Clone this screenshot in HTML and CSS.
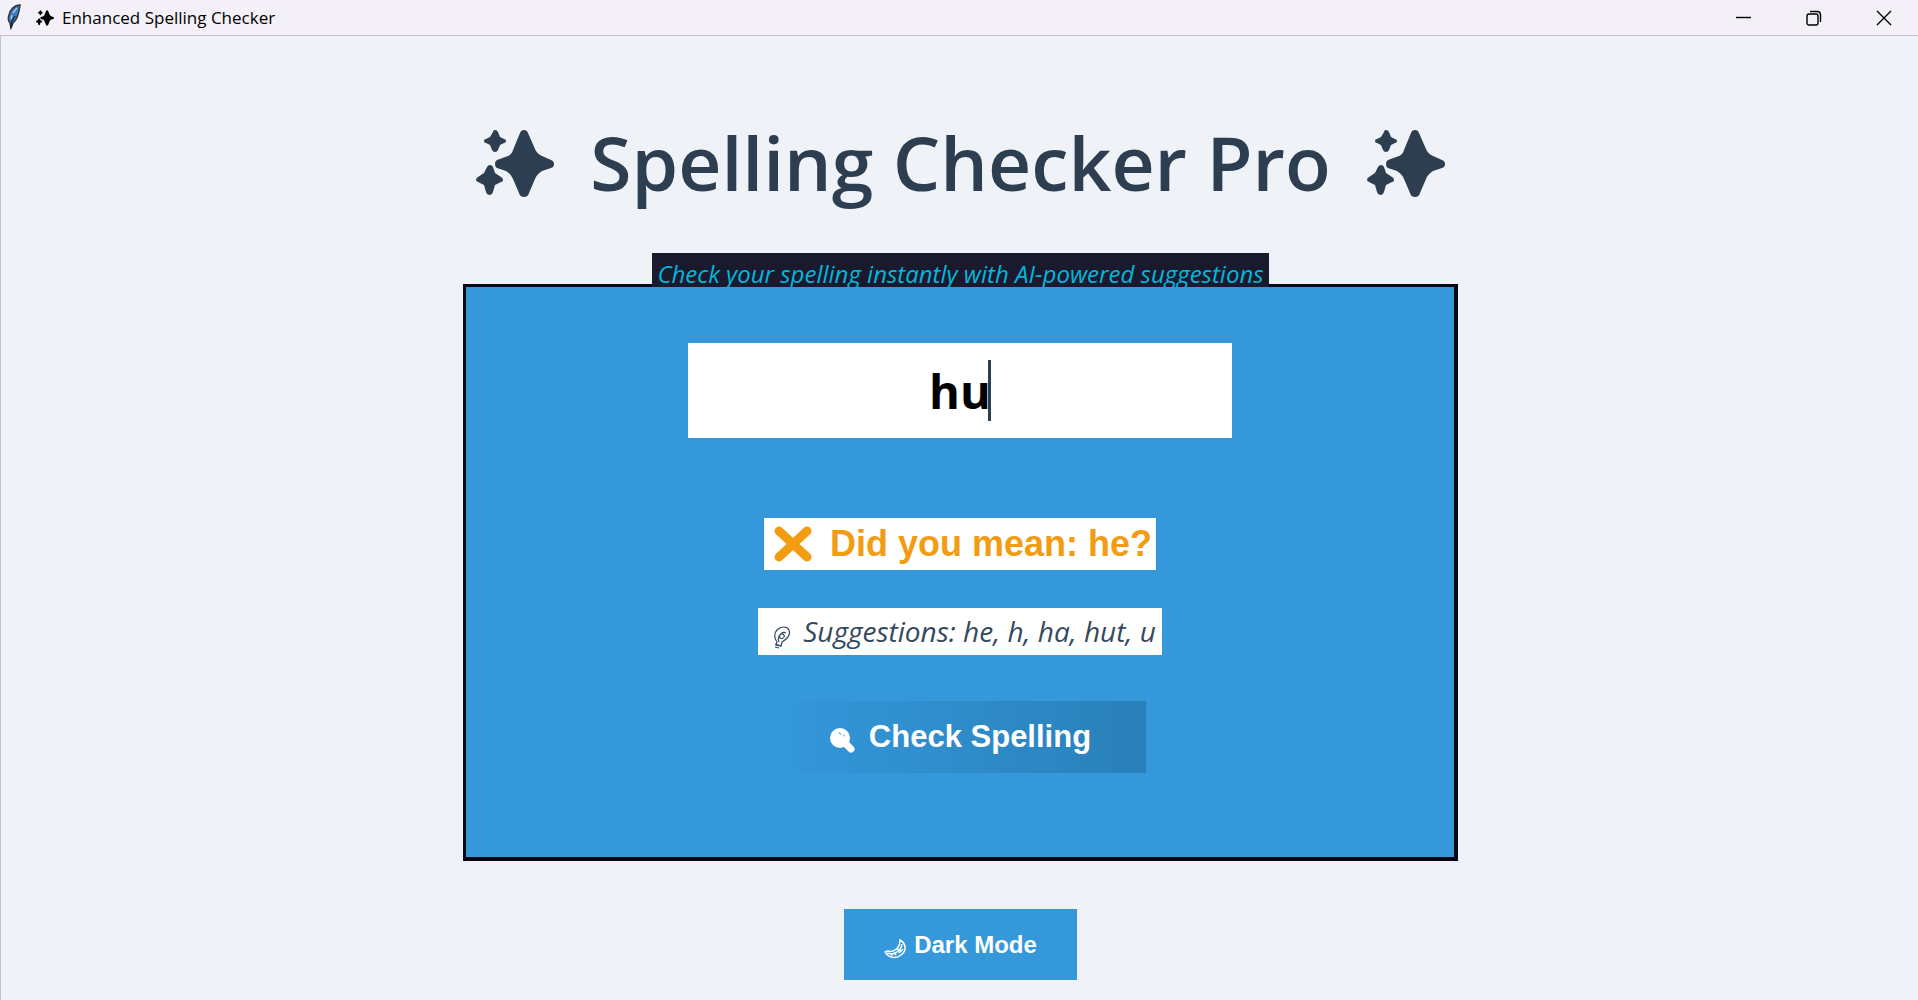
FILE: index.html
```html
<!DOCTYPE html>
<html lang="en">
<head>
<meta charset="utf-8">
<meta name="viewport" content="width=device-width, initial-scale=1">
<title>✨ Enhanced Spelling Checker</title>
<link rel="stylesheet" href="styles.css">
</head>
<body>
<svg width="0" height="0" class="defs" aria-hidden="true">
  <symbol id="sparkles" viewBox="0 0 78 68">
    <path d="M44 3Q45 0 48 0Q51 0 52 3L59 19Q61 24 66 26L75 30Q78 31 78 34Q78 37 75 38L66 41Q61 44 59 49L53 63Q52 67 48 67Q44 67 43 63L37 49Q35 44 30 41L21 38Q19 37 19 34Q19 31 21 30L32 26Q36 24 37 20Z"/>
    <path d="M17 2Q17 0 19 0Q21 0 22 2L24 7L28 9Q30 9 30 11Q30 13 28 13L24 15L22 20Q21 22 19 22Q17 22 16 20L14 15L10 13Q8 13 8 11Q8 9 10 9L14 7Z"/>
    <path d="M11 37Q12 35 14 35Q16 35 17 37L19 43L25 47Q27 48 27 50Q27 52 25 52L19 55L17 62Q16 65 14 65Q11 65 10 62L8 55L2 52Q0 51 0 50Q0 48 2 47L8 43Z"/>
  </symbol>
</svg>
<div class="window">
  <header class="titlebar">
    <svg class="feather" viewBox="0 0 16 26" aria-hidden="true">
      <path d="M14 1C8 1 4 6 3 11C2 14 2 17 4 19L5 24L7 19C11 16 13 10 14 1Z" fill="#3d78b8" stroke="#33343c" stroke-width="1.5"/>
      <path d="M9 12L6 17L5 24" fill="none" stroke="#17202c" stroke-width="1.3"/>
      <path d="M11 4L7 9M6 11L5 15" stroke="#a9cdf0" stroke-width="1.3"/>
    </svg>
    <svg class="mini-sparkles" aria-hidden="true"><use href="#sparkles"/></svg>
    <span class="caption">Enhanced Spelling Checker</span>
    <button class="control" aria-label="Minimize"><svg viewBox="0 0 16 16"><path d="M0 7.5H15"/></svg></button>
    <button class="control" aria-label="Restore"><svg viewBox="0 0 16 16"><rect x="1" y="4" width="11" height="11" rx="2"/><path d="M4 1.500H11Q14.500 1.500 14.500 5V12"/></svg></button>
    <button class="control" aria-label="Close"><svg viewBox="0 0 16 16"><path d="M1 1L15 15M15 1L1 15"/></svg></button>
  </header>
  <main class="page">
    <h1 class="heading">
      <svg class="sparkles" aria-hidden="true"><use href="#sparkles"/></svg>
      <span>Spelling Checker Pro</span>
      <svg class="sparkles" aria-hidden="true"><use href="#sparkles"/></svg>
    </h1>
    <p class="tagline">Check your spelling instantly with AI-powered suggestions</p>
    <section class="card">
      <div class="field">
        <input class="word" type="text" value="hu" aria-label="Word to check">
        <span class="caret"></span>
      </div>
      <p class="result">
        <svg class="cross" viewBox="0 0 38 36" aria-hidden="true"><path d="M5 5L33 31M33 5L5 31"/></svg>
        <span>Did you mean: he?</span>
      </p>
      <p class="suggestions">
        <svg class="bulb" viewBox="0 0 18 24" aria-hidden="true">
          <path d="M4 16C1 12 1 7 4 4C8 0 14 0 16 4C18 9 14 13 9 16L8 20L3 19Z"/>
          <path d="M6 16C4 11 7 7 10 8C13 10 10 14 7 12C5 9 10 5 13 7M2 18L8 20M2 21L6 22"/>
        </svg>
        <span>Suggestions: he, h, ha, hut, u</span>
      </p>
      <button class="check">
        <svg class="lens" viewBox="0 0 26 25" aria-hidden="true"><circle cx="11" cy="10" r="10"/><path d="M16 15L22 21"/><path class="glint" d="M10 5L12 6M15 7V8"/></svg>
        <span>Check Spelling</span>
      </button>
    </section>
    <button class="mode">
      <svg class="moon" viewBox="0 0 22 20" aria-hidden="true">
        <path d="M16 1C22 4 23 12 17 16C12 20 4 19 1 13L3 12C10 14 16 9 16 1Z"/>
        <path d="M3 14C10 17 17 12 18 5M13 10L17 12M10 13L12 16M19 10L15 14M7 14L8 17"/>
      </svg>
      <span>Dark Mode</span>
    </button>
  </main>
</div>
</body>
</html>
```
FILE: styles.css
```css
* { box-sizing: border-box; }
body {
  margin: 0;
  background: #eff3f8;
  color: #2c3e50;
  font-family: "Open Sans", "Noto Sans", sans-serif;
}
p, h1 { margin: 0; }
button { border: 0; border-radius: 0; padding: 0; font-family: "Liberation Sans", Arial, sans-serif; font-weight: 700; color: #fff; }
svg { display: block; flex: none; }
.defs { position: absolute; }
.window { display: flex; flex-direction: column; min-height: 100vh; }

.titlebar {
  display: flex;
  align-items: center;
  height: 36px;
  padding-left: 6px;
  background: #f3f0f7;
  border-bottom: 1px solid #c3c2ca;
}
.feather { width: 16px; height: 26px; margin-bottom: 2px; }
.mini-sparkles { width: 18px; height: 16px; margin: 0 8px 0 14px; fill: #000; }
.caption { flex: 1; font: 17px/24px "Open Sans", "Noto Sans", sans-serif; color: #000; }
.control { display: grid; place-items: center; width: 70px; height: 35px; padding-left: 1px; background: none; }
.control svg { width: 16px; height: 16px; fill: none; stroke: #000; stroke-width: 1.4; }

.page {
  flex: 1;
  display: flex;
  flex-direction: column;
  align-items: center;
  padding: 76px 0 20px 2px;
  border-left: 1px solid #c3c2ca;
}
.heading {
  display: flex;
  align-items: center;
  gap: 36px;
  font-size: 75px;
  line-height: 100px;
  font-weight: 600;
  white-space: nowrap;
}
.sparkles { width: 78px; height: 68px; margin-top: 4px; fill: #2c3e50; }
.tagline {
  position: relative;
  z-index: 1;
  height: 34px;
  margin: 41px 0 -3px;
  padding: 4px 5px 0;
  overflow: hidden;
  background: #1a1a2e;
  color: #00b8dc;
  font: italic 24px/34px "Open Sans", "Noto Sans", sans-serif;
  white-space: nowrap;
}
.card {
  display: flex;
  flex-direction: column;
  align-items: center;
  width: 52%;
  padding: 56px 0 84px;
  background: #3498db;
  border: solid #0a0714;
  border-width: 3px 4px 4px 3px;
}
.field { position: relative; width: 55%; margin-bottom: 80px; }
.word {
  display: block;
  width: 100%;
  height: 95px;
  padding: 0;
  border: 0;
  outline: 0;
  background: #fff;
  color: #000;
  font: 700 47px/64px "Open Sans", "Noto Sans", sans-serif;
  text-align: center;
}
.caret { position: absolute; top: 17px; left: calc(50% + 28px); width: 3px; height: 61px; background: #2c3e50; }
.result, .suggestions { display: flex; align-items: center; background: #fff; white-space: nowrap; }
.result {
  gap: 18px;
  height: 52px;
  margin-bottom: 38px;
  padding: 0 4px 0 10px;
  color: #f39c12;
  font: 700 36px/52px "Liberation Sans", Arial, sans-serif;
}
.cross { width: 38px; height: 36px; fill: none; stroke: #f39c12; stroke-width: 9; stroke-linecap: round; }
.suggestions {
  gap: 12px;
  height: 47px;
  margin-bottom: 46px;
  padding: 0 6px 0 15px;
  color: #34495e;
  font: italic 28px/47px "Open Sans", "Noto Sans", sans-serif;
}
.bulb { width: 18px; height: 24px; margin-top: 12px; fill: none; stroke: #34495e; stroke-width: 1.2; }
.check {
  display: flex;
  align-items: center;
  justify-content: center;
  gap: 14px;
  width: 372px;
  height: 72px;
  background: linear-gradient(90deg, #3498db, #2980b9);
  font-size: 31px;
}
.lens { width: 26px; height: 25px; margin-top: 6px; fill: #fff; stroke: #fff; stroke-width: 7; stroke-linecap: round; }
.lens circle { stroke: none; }
.lens .glint { stroke: #3498db; stroke-width: 1; }
.mode {
  display: flex;
  align-items: center;
  justify-content: center;
  gap: 8px;
  width: 233px;
  height: 71px;
  margin-top: 48px;
  background: #3498db;
  font-size: 24px;
}
.moon { width: 22px; height: 20px; margin-top: 8px; fill: none; stroke: #fff; stroke-width: 1.5; }
```
